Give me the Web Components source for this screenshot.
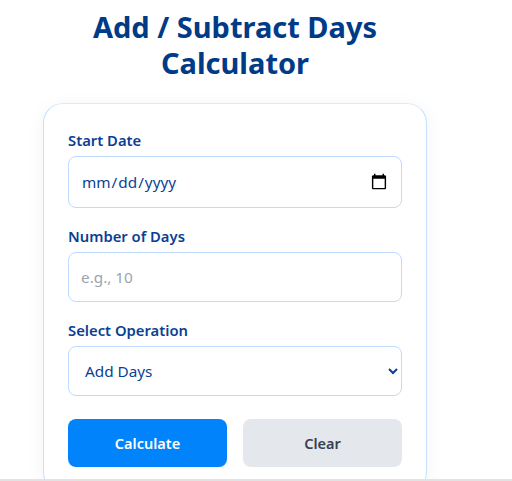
<!DOCTYPE html>
<html lang="en">
  <head>
    <meta charset="UTF-8" />
    <title>Add / Subtract Days Calculator</title>
    <style>
      html, body { margin: 0; height: 100%; overflow: hidden; background: #fff; }
      body { font-family: 'Noto Sans', 'Open Sans', sans-serif; }
    </style>
  </head>
  <body>
    <days-calculator heading="Add / Subtract Days Calculator">
      <form-field label="Start Date"><input type="date" /></form-field>
      <form-field label="Number of Days"><input type="number" placeholder="e.g., 10" /></form-field>
      <form-field label="Select Operation">
        <select><option>Add Days</option><option>Subtract Days</option></select>
      </form-field>
      <action-button slot="actions" kind="primary">Calculate</action-button>
      <action-button slot="actions" kind="secondary">Clear</action-button>
    </days-calculator>

    <template id="calculator-template">
      <style>
        :host { display: block; box-sizing: border-box; height: 481px; border-bottom: 2px solid #e2e2e2; overflow: hidden; }
        .page { width: 470px; }
        h1 {
          margin: 0 auto;
          padding-top: 9px;
          width: 340px;
          height: 103px;
          box-sizing: border-box;
          font-size: 29px;
          line-height: 36px;
          font-weight: 700;
          text-align: center;
          color: #003b87;
        }
        .card {
          box-sizing: border-box;
          width: 384px;
          margin: 0 auto;
          padding: 24px;
          background: #fff;
          border: 1px solid #c7e0fc;
          border-top-color: #dcebfb;
          border-radius: 20px;
          box-shadow: 0 4px 20px rgba(0, 0, 0, 0.05);
          display: flex;
          flex-direction: column;
          gap: 16px;
        }
        .actions { display: grid; grid-template-columns: 1fr 1fr; gap: 16px; margin-top: 7px; }
      </style>
      <div class="page">
        <h1></h1>
        <div class="card">
          <slot></slot>
          <div class="actions"><slot name="actions"></slot></div>
        </div>
      </div>
    </template>

    <template id="field-template">
      <style>
        :host { display: block; }
        label { display: block; font-size: 14.8px; line-height: 24px; font-weight: 600; color: #0b3f94; margin-bottom: 4px; }
        .control { display: block; }
      </style>
      <label></label>
      <div class="control"><slot></slot></div>
    </template>

    <template id="button-template">
      <style>
        :host { display: block; }
        button {
          display: block;
          width: 100%;
          height: 48px;
          border: 0;
          border-radius: 8px;
          font: 600 14.5px 'Noto Sans', 'Open Sans', sans-serif;
        }
        :host([kind="primary"]) button { background: #0184fb; color: #fff; }
        :host([kind="secondary"]) button { background: #e4e7eb; color: #374151; }
      </style>
      <button type="button"><slot></slot></button>
    </template>

    <script>
      class DaysCalculator extends HTMLElement {
        constructor() {
          super();
          this.attachShadow({ mode: 'open' });
          const t = document.getElementById('calculator-template');
          this.shadowRoot.appendChild(t.content.cloneNode(true));
          this.shadowRoot.querySelector('h1').textContent = this.getAttribute('heading');
        }
      }

      class FormField extends HTMLElement {
        constructor() {
          super();
          this.attachShadow({ mode: 'open' });
          const t = document.getElementById('field-template');
          this.shadowRoot.appendChild(t.content.cloneNode(true));
          this.shadowRoot.querySelector('label').textContent = this.getAttribute('label');
        }
      }

      class ActionButton extends HTMLElement {
        constructor() {
          super();
          this.attachShadow({ mode: 'open' });
          const t = document.getElementById('button-template');
          this.shadowRoot.appendChild(t.content.cloneNode(true));
        }
      }

      customElements.define('days-calculator', DaysCalculator);
      customElements.define('form-field', FormField);
      customElements.define('action-button', ActionButton);

      // the native controls are light DOM, so they get their styles from here
      const css = document.createElement('style');
      css.textContent = `
        form-field input, form-field select {
          display: block;
          box-sizing: border-box;
          width: 100%;
          height: 50px;
          padding: 0 12px;
          border: 1px solid #bfdbfe;
          border-radius: 8px;
          background: #fff;
          color: #0b3f94;
          font: 400 15.3px 'Noto Sans', 'Open Sans', sans-serif;
          outline: none;
        }
        form-field input[type="date"] { height: 52px; }
        form-field input::-webkit-calendar-picker-indicator { width: 18px; height: 18px; padding: 0; margin: 0 1px 0 0; }
        form-field input::placeholder { color: #9ca3af; }
      `;
      document.head.appendChild(css);
    </script>
  </body>
</html>
